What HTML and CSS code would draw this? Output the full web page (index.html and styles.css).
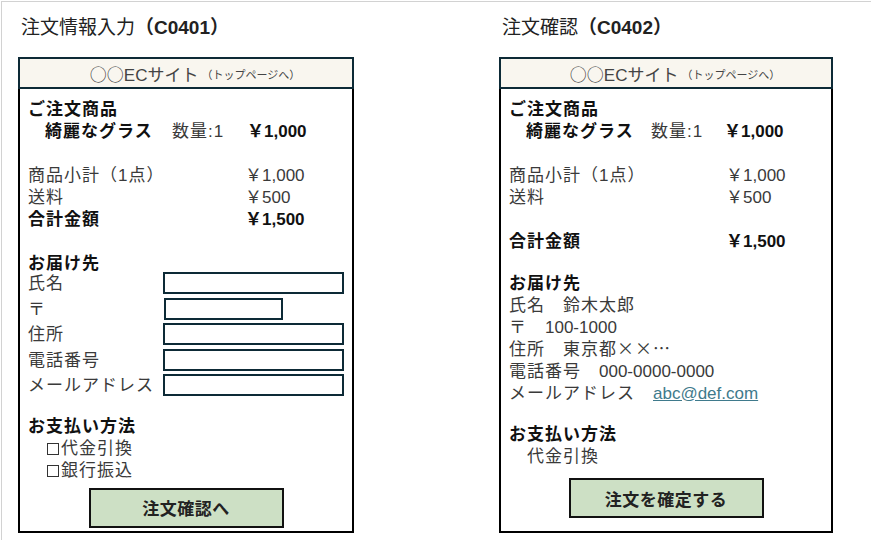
FILE: index.html
```html
<!DOCTYPE html>
<html lang="ja">
<head>
  <meta charset="UTF-8">
  <meta name="viewport" content="width=device-width, initial-scale=1.0">
  <title>注文画面</title>
  <link rel="stylesheet" href="styles.css">
</head>
<body>
  <div class="sheet">

    <!-- 注文情報入力 -->
    <div class="screen">
      <h2 class="screen-title">注文情報入力<b>（C0401）</b></h2>
      <div class="card card-left">
        <div class="card-head"><span class="cjk">○○</span>ECサイト<small>（トップページへ）</small></div>
        <div class="card-body">
          <p class="line strong">ご注文商品</p>
          <p class="line item"><b class="item-name">綺麗なグラス</b><span class="item-qty">数量:1</span><b class="num">￥1,000</b></p>

          <p class="line price gap"><span class="label">商品小計（1点）</span><span class="num">￥1,000</span></p>
          <p class="line price"><span class="label">送料</span><span class="num">￥500</span></p>
          <p class="line price strong"><span class="label">合計金額</span><span class="num">￥1,500</span></p>

          <p class="line strong gap">お届け先</p>
          <div class="fields">
            <div class="field"><span class="field-label">氏名</span><span class="input"></span></div>
            <div class="field"><span class="field-label">〒</span><span class="input input-short"></span></div>
            <div class="field"><span class="field-label">住所</span><span class="input"></span></div>
            <div class="field"><span class="field-label">電話番号</span><span class="input"></span></div>
            <div class="field"><span class="field-label">メールアドレス</span><span class="input"></span></div>
          </div>

          <p class="line strong pay-title">お支払い方法</p>
          <p class="line option"><span class="check"></span>代金引換</p>
          <p class="line option"><span class="check"></span>銀行振込</p>

          <div class="btn-row"><button class="btn">注文確認へ</button></div>
        </div>
      </div>
    </div>

    <!-- 注文確認 -->
    <div class="screen">
      <h2 class="screen-title">注文確認<b>（C0402）</b></h2>
      <div class="card card-right">
        <div class="card-head"><span class="cjk">○○</span>ECサイト<small>（トップページへ）</small></div>
        <div class="card-body">
          <p class="line strong">ご注文商品</p>
          <p class="line item"><b class="item-name">綺麗なグラス</b><span class="item-qty">数量:1</span><b class="num">￥1,000</b></p>

          <p class="line price gap"><span class="label">商品小計（1点）</span><span class="num">￥1,000</span></p>
          <p class="line price"><span class="label">送料</span><span class="num">￥500</span></p>
          <p class="line price strong gap"><span class="label">合計金額</span><span class="num">￥1,500</span></p>

          <p class="line strong addr-title">お届け先</p>
          <p class="line">氏名　鈴木太郎</p>
          <p class="line">〒　<span class="num">100-1000</span></p>
          <p class="line">住所　東京都<span class="cjk">××…</span></p>
          <p class="line">電話番号　<span class="num">000-0000-0000</span></p>
          <p class="line">メールアドレス　<a href="#" class="mail num">abc@def.com</a></p>

          <p class="line strong pay-confirm">お支払い方法</p>
          <p class="line option">代金引換</p>

          <div class="btn-row confirm"><button class="btn">注文を確定する</button></div>
        </div>
      </div>
    </div>

  </div>
</body>
</html>
```

FILE: styles.css
```css
body {
  margin: 0;
  font-family: "Liberation Sans", "Noto Sans CJK JP", sans-serif;
  color: #3a3a3a;
  background-color: #fff;
}
.sheet {
  margin: 1px 0 0 1px;
  height: 539px;
  box-sizing: border-box;
  border-top: 1px solid #d2d2d2;
  border-left: 1px solid #d2d2d2;
  padding: 13px 0 0 16px;
  display: flex;
  gap: 145px;
}
.screen-title {
  margin: 0 0 16px 3px;
  font-size: 19px;
  line-height: 26px;
  font-weight: normal;
  color: #222;
}
.screen-title b {
  font-weight: bold;
}
.card {
  height: 476px;
  box-sizing: border-box;
  border: 2px solid #000;
  border-top: none;
}
.card-left {
  width: 336px;
}
.card-right {
  width: 334px;
}
.card-head {
  margin: 0 -2px;
  height: 32px;
  box-sizing: border-box;
  border: 2px solid #0d2a36;
  background-color: #f9f6ef;
  padding-left: 18px;
  display: flex;
  align-items: center;
  justify-content: center;
  font-size: 17px;
  color: #444;
}
.card-head small {
  font-size: 11px;
  margin-left: 3px;
  margin-top: 2px;
}
.card-body {
  padding: 9.5px 8px 0;
}
.line {
  margin: 0;
  font-size: 17px;
  line-height: 22px;
  letter-spacing: 1px;
  white-space: nowrap;
}
.num {
  letter-spacing: 0;
}
.cjk {
  font-family: "Noto Sans CJK JP", sans-serif;
  line-height: 1;
}
.gap {
  margin-top: 22px;
}
.strong {
  font-weight: bold;
  color: #111;
}
.item {
  padding-left: 17px;
  display: flex;
}
.item b {
  color: #111;
}
.item-name {
  width: 127px;
}
.item-qty {
  width: 75px;
}
.card-right .item-name {
  width: 125px;
}
.card-right .item-qty {
  width: 73px;
}
.price {
  display: flex;
}
.price .label {
  width: 217px;
}
.fields {
  margin-top: -2.5px;
}
.field {
  display: flex;
  align-items: flex-start;
  height: 25.5px;
  font-size: 17px;
  line-height: 24px;
  letter-spacing: 1px;
}
.field-label {
  width: 136px;
}
.input {
  width: 182px;
  height: 22px;
  box-sizing: border-box;
  border: 2px solid #0d2a36;
}
.input-short {
  width: 119px;
}
.pay-title {
  margin-top: 16px;
}
.option {
  padding-left: 18px;
}
.check {
  display: inline-block;
  width: 12px;
  height: 12px;
  box-sizing: border-box;
  border: 1px solid #333;
  margin: 0 2px 0 1px;
  vertical-align: -1px;
}
.addr-title {
  margin-top: 20px;
}
.pay-confirm {
  margin-top: 19.5px;
}
.mail {
  color: #3f7a8c;
}
.btn-row {
  display: flex;
  justify-content: center;
  margin-top: 6px;
}
.btn-row.confirm {
  margin-top: 10px;
}
.btn {
  width: 195px;
  height: 40px;
  border: 2px solid #111;
  background-color: #cde0c5;
  font-family: inherit;
  font-size: 17px;
  font-weight: bold;
  letter-spacing: 0.5px;
  color: #222;
  padding: 0;
}
```
